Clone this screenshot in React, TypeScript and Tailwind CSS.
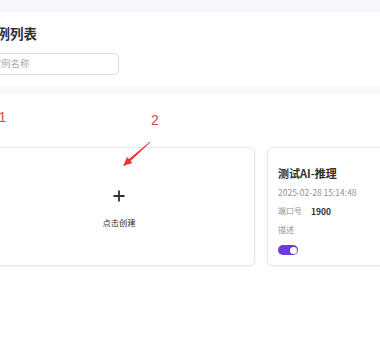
import React from "react";

export default function App() {
  return (
    <div
      className="relative w-[380px] h-[360px] overflow-hidden bg-white"
      style={{ fontFamily: '"Noto Sans CJK SC", "Noto Sans", sans-serif' }}
    >
      <div className="h-[12px] bg-[#f5f7fa]" />
      <div className="h-[74px] bg-white ml-[-17px] pt-[12px]">
        <div className="text-[13.5px] leading-[18px] font-bold text-[#303133]">实例列表</div>
        <div className="mt-[11px] h-[22px] w-[136px] rounded-[4px] border border-[#dcdfe6] bg-white pl-[8px] flex items-center">
          <span className="text-[9.3px] text-[#a8abb2] leading-none">实例名称</span>
        </div>
      </div>
      <div className="h-[8px] bg-[#f5f7fa]" />
      <div className="ml-[-17px] pt-[53px]">
        <div className="flex gap-[12px]">
          <div className="w-[272px] h-[119px] shrink-0 rounded-[6px] border border-[#e4e7ed] bg-white shadow-[0_1px_3px_rgba(0,0,0,0.05)] flex flex-col items-center justify-center pt-[4px]">
            <svg width="12" height="12" viewBox="0 0 12 12">
              <path d="M6 0.5V11.5M0.5 6H11.5" stroke="#303133" strokeWidth="1.8" />
            </svg>
            <div className="mt-[14px] text-[8.3px] leading-[12px] text-[#303133]">点击创建</div>
          </div>
          <div className="w-[272px] h-[119px] shrink-0 rounded-[6px] border border-[#e4e7ed] bg-white shadow-[0_1px_3px_rgba(0,0,0,0.05)] pl-[10px] pt-[18px]">
            <div className="text-[11px] leading-[14px] font-bold text-[#303133]">测试AI-推理</div>
            <div className="mt-[5px] text-[8.5px] leading-[14px] text-[#909399]">2025-02-28 15:14:48</div>
            <div className="mt-[5px] flex items-center text-[8px] leading-[14px]">
              <span className="text-[#909399]">端口号</span>
              <span className="ml-[9px] font-bold text-[#303133] text-[8.5px]">1900</span>
            </div>
            <div className="mt-[5px] text-[8px] leading-[14px] text-[#909399]">描述</div>
            <div className="mt-[8px] w-[20px] h-[10px] rounded-full bg-[#6c3ae0] flex items-center justify-end pr-[1.5px]">
              <div className="w-[7px] h-[7px] rounded-full bg-white" />
            </div>
          </div>
        </div>
      </div>

      <div className="absolute left-[-1.5px] top-[109px] text-[14px] leading-[16px] text-[#e04848]" style={{ fontFamily: '"Liberation Sans", sans-serif' }}>1</div>
      <div className="absolute left-[151px] top-[112px] text-[14px] leading-[16px] text-[#e04848]" style={{ fontFamily: '"Liberation Sans", sans-serif' }}>2</div>
      <svg className="absolute left-[118px] top-[138px]" width="36" height="32" viewBox="0 0 36 32">
        <polygon
          points="32.4,4.3 12.53,22.91 14.39,25 5,28 9.07,19.02 10.93,21.11 31.8,3.7"
          fill="#e8343a"
        />
      </svg>
    </div>
  );
}
